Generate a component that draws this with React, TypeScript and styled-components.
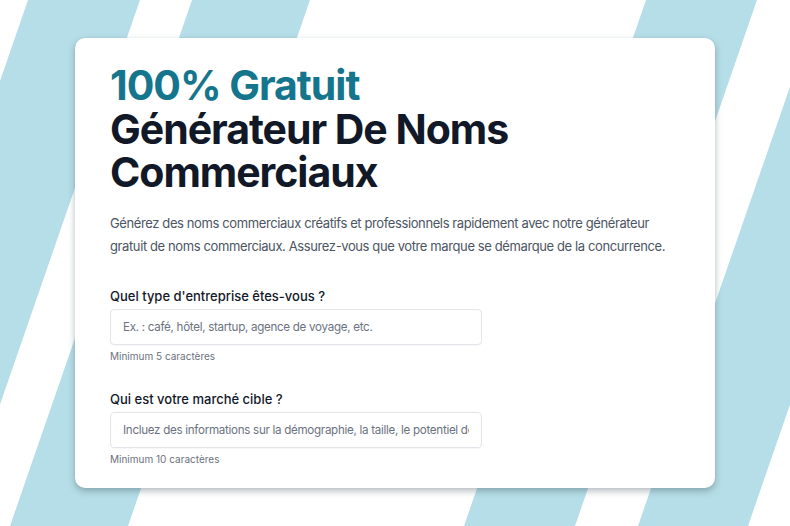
import React from 'react';
import styled, {createGlobalStyle} from 'styled-components';

const GlobalStyle = createGlobalStyle`
  html, body {
    margin: 0;
    padding: 0;
    background: #ffffff;
  }
  body {
    font-family: Inter, "Noto Sans", "Liberation Sans", sans-serif;
    -webkit-font-smoothing: antialiased;
  }
  * {
    box-sizing: border-box;
  }
`;

const Page = styled.div`
  position: relative;
  width: 790px;
  height: 526px;
  overflow: hidden;
  background: #ffffff;
`;

// decorative diagonal stripes behind the card
const Stripes = styled.svg`
  position: absolute;
  inset: 0;
  width: 100%;
  height: 100%;
  z-index: 0;
`;

const Content = styled.main`
  position: relative;
  z-index: 1;
  padding: 38px 75px 0;
`;

const Card = styled.section`
  background: #ffffff;
  border-radius: 10px;
  padding: 26px 35px 22px;
  box-shadow: 0 3px 7px rgba(40, 60, 70, 0.35), 0 0 1px rgba(0, 0, 0, 0.08);
  display: flex;
  flex-direction: column;
`;

const Title = styled.h1`
  margin: 0;
  font-size: 41px;
  line-height: 43.5px;
  font-weight: 700;
  letter-spacing: -0.025em;
  color: #111827;
`;

const Accent = styled.span`
  display: block;
  color: #15758d;
`;

const Lead = styled.p`
  margin: 17px 0 0;
  font-size: 13px;
  line-height: 23px;
  letter-spacing: -0.03em;
  color: #4b5563;
  max-width: 570px;
`;

const Form = styled.form`
  margin-top: 29px;
  display: flex;
  flex-direction: column;
  gap: 27px;
`;

const Field = styled.div`
  display: flex;
  flex-direction: column;
  gap: 4px;
`;

const Label = styled.label`
  font-size: 13px;
  line-height: 18px;
  font-weight: 500;
  color: #111827;
`;

const Input = styled.input`
  width: 372px;
  height: 36px;
  padding: 0 12px;
  border: 1px solid #e2e5ea;
  border-radius: 4px;
  background: #ffffff;
  font-family: inherit;
  font-size: 11.6px;
  letter-spacing: -0.025em;
  color: #111827;
  box-shadow: 0 1px 1px rgba(0, 0, 0, 0.03);
  outline: none;

  &::placeholder {
    color: #6b7280;
  }
`;

const Hint = styled.span`
  font-size: 10px;
  line-height: 14px;
  color: #6b7280;
`;

const stripes = [
  [28, 140],
  [192, 310],
  [646, 757],
  [820, 930],
];

export default function App() {
  return (
    <>
      <GlobalStyle />
      <Page>
        <Stripes viewBox="0 0 790 526" preserveAspectRatio="none" aria-hidden="true">
          {stripes.map(([a, b]) => (
            <polygon
              key={a}
              points={`${a},0 ${b},0 ${b - 182},526 ${a - 182},526`}
              fill="#b6dee8"
            />
          ))}
        </Stripes>
        <Content>
          <Card>
            <Title>
              <Accent>100% Gratuit</Accent>
              Générateur De Noms Commerciaux
            </Title>
            <Lead>
              Générez des noms commerciaux créatifs et professionnels rapidement avec notre générateur
              gratuit de noms commerciaux. Assurez-vous que votre marque se démarque de la concurrence.
            </Lead>
            <Form onSubmit={e => e.preventDefault()}>
              <Field>
                <Label htmlFor="type">Quel type d'entreprise êtes-vous ?</Label>
                <Input id="type" placeholder="Ex. : café, hôtel, startup, agence de voyage, etc." />
                <Hint>Minimum 5 caractères</Hint>
              </Field>
              <Field>
                <Label htmlFor="market">Qui est votre marché cible ?</Label>
                <Input
                  id="market"
                  placeholder="Incluez des informations sur la démographie, la taille, le potentiel de croissance, etc."
                />
                <Hint>Minimum 10 caractères</Hint>
              </Field>
            </Form>
          </Card>
        </Content>
      </Page>
    </>
  );
}
